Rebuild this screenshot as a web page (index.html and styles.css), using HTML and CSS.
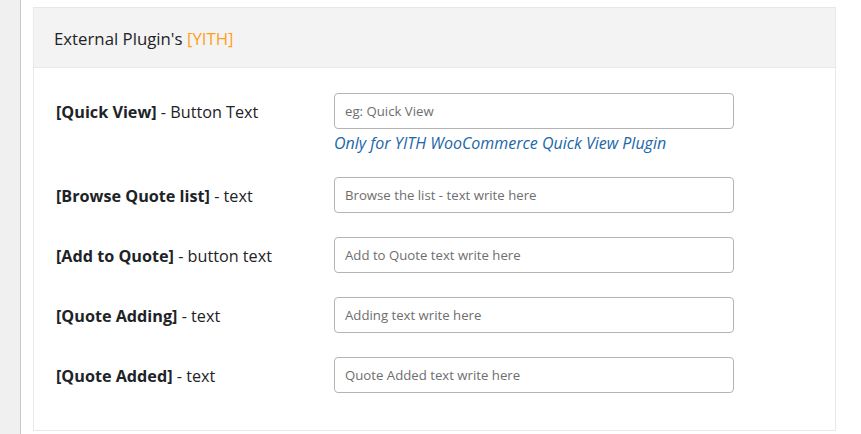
FILE: index.html
```html
<!DOCTYPE html>
<html lang="en">
<head>
<meta charset="utf-8">
<title>External Plugin's [YITH]</title>
<link rel="stylesheet" href="styles.css">
</head>
<body>
<div class="sidebar"></div>
<div class="main">
  <div class="card">
    <div class="card-header">
      <h2 class="card-title">External Plugin's <span class="accent">[YITH]</span></h2>
    </div>
    <div class="card-body">
      <div class="row">
        <label class="label"><strong>[Quick View]</strong> - Button Text</label>
        <div class="field">
          <input class="input" type="text" placeholder="eg: Quick View">
          <p class="desc"><em>Only for YITH WooCommerce Quick View Plugin</em></p>
        </div>
      </div>
      <div class="row">
        <label class="label"><strong>[Browse Quote list]</strong> - text</label>
        <div class="field">
          <input class="input" type="text" placeholder="Browse the list - text write here">
        </div>
      </div>
      <div class="row">
        <label class="label"><strong>[Add to Quote]</strong> - button text</label>
        <div class="field">
          <input class="input" type="text" placeholder="Add to Quote text write here">
        </div>
      </div>
      <div class="row">
        <label class="label"><strong>[Quote Adding]</strong> - text</label>
        <div class="field">
          <input class="input" type="text" placeholder="Adding text write here">
        </div>
      </div>
      <div class="row">
        <label class="label"><strong>[Quote Added]</strong> - text</label>
        <div class="field">
          <input class="input" type="text" placeholder="Quote Added text write here">
        </div>
      </div>
    </div>
  </div>
</div>
</body>
</html>
```

FILE: styles.css
```css
* { box-sizing: border-box; }
html, body { height: 100%; }
body {
  margin: 0;
  display: flex;
  background: #ffffff;
  font-family: "Open Sans", "Noto Sans", "Liberation Sans", sans-serif;
  color: #1d2327;
  overflow: hidden;
}
.sidebar {
  width: 21px;
  flex: 0 0 21px;
  background: #f0f0f0;
  border-right: 1px solid #c8c8c8;
}
.main {
  flex: 1;
  padding: 7px 25px 0 12px;
}
.card {
  border: 1px solid #e8e8e8;
  background: #fff;
}
.card-header {
  background: #f3f3f3;
  height: 60px;
  border-bottom: 1px solid #e8e8e8;
  display: flex;
  align-items: center;
  padding: 2px 0 0 20px;
}
.card-title {
  margin: 0;
  font-size: 16.8px;
  font-weight: 400;
  color: #1d2327;
}
.accent { color: #ff9f1c; }
.card-body {
  padding: 25px 22px 37px 22px;
}
.row {
  display: grid;
  grid-template-columns: 278px 400px;
  align-items: start;
  margin-bottom: 24px;
}
.row:last-child { margin-bottom: 0; }
.label {
  font-size: 16.2px;
  line-height: 20px;
  padding-top: 9px;
  color: #1d2327;
}
.label strong { font-weight: 700; }
.input {
  display: block;
  width: 400px;
  height: 36px;
  margin: 0;
  padding: 0 10px;
  border: 1px solid #b4b4b4;
  border-radius: 4px;
  background: #fff;
  font-family: inherit;
  font-size: 13.2px;
  color: #2c3338;
  outline: none;
}
.input::placeholder { color: #6e6e6e; opacity: 1; }
.desc {
  margin: 4px 0 0;
  font-size: 16px;
  line-height: 20px;
  color: #2166a8;
}
```
